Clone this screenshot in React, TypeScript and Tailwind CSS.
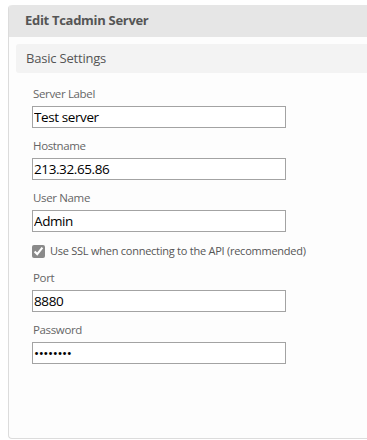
import React from 'react';

const fields = [
  { label: 'Server Label', value: 'Test server', type: 'text' },
  { label: 'Hostname', value: '213.32.65.86', type: 'text' },
  { label: 'User Name', value: 'Admin', type: 'text' },
];

const tail = [
  { label: 'Port', value: '8880', type: 'text' },
  { label: 'Password', value: 'password', type: 'password' },
];

function Field({ label, value, type }: { label: string; value: string; type: string }) {
  return (
    <div className="flex flex-col">
      <label className="h-[20px] pl-[1px] text-[11.5px] leading-[20px] tracking-[-0.35px] text-[#666]">{label}</label>
      <input
        type={type}
        defaultValue={value}
        className="mt-[2px] h-[22px] w-[254px] border border-[#a3a3a3] bg-white px-[1px] text-[13.5px] leading-[20px] tracking-[-0.4px] text-black outline-none"
      />
    </div>
  );
}

export default function App() {
  return (
    <div className="h-[440px] w-[367px] overflow-hidden bg-white pl-[8px] pt-[5px] font-['Open_Sans',sans-serif]">
      <div className="h-[434px] w-[380px] rounded-l-[4px] border-b border-l border-[#dcdcdc] bg-[#fdfdfd]">
        {/* Header */}
        <div className="flex h-[32px] items-center rounded-tl-[4px] bg-[#e6e6e6] pl-[16px] text-[13px] font-bold tracking-[-0.3px] text-[#555]">
          Edit Tcadmin Server
        </div>

        <div className="pl-[7px] pt-[7px]">
          {/* Section bar */}
          <div className="flex h-[29px] items-center rounded-l-[3px] bg-[#f3f3f3] pl-[10px] text-[13px] tracking-[-0.2px] text-[#555]">
            Basic Settings
          </div>

          <div className="flex flex-col gap-[8px] pl-[16px] pt-[11px]">
            {fields.map((f) => (
              <Field key={f.label} {...f} />
            ))}

            <label className="flex h-[20px] translate-y-[1px] items-center gap-[5px] text-[11px] tracking-[-0.25px] text-[#555]">
              <input type="checkbox" defaultChecked className="h-[13px] w-[13px] accent-[#8a8a8a]" />
              Use SSL when connecting to the API (recommended)
            </label>

            {tail.map((f) => (
              <Field key={f.label} {...f} />
            ))}
          </div>
        </div>
      </div>
    </div>
  );
}
